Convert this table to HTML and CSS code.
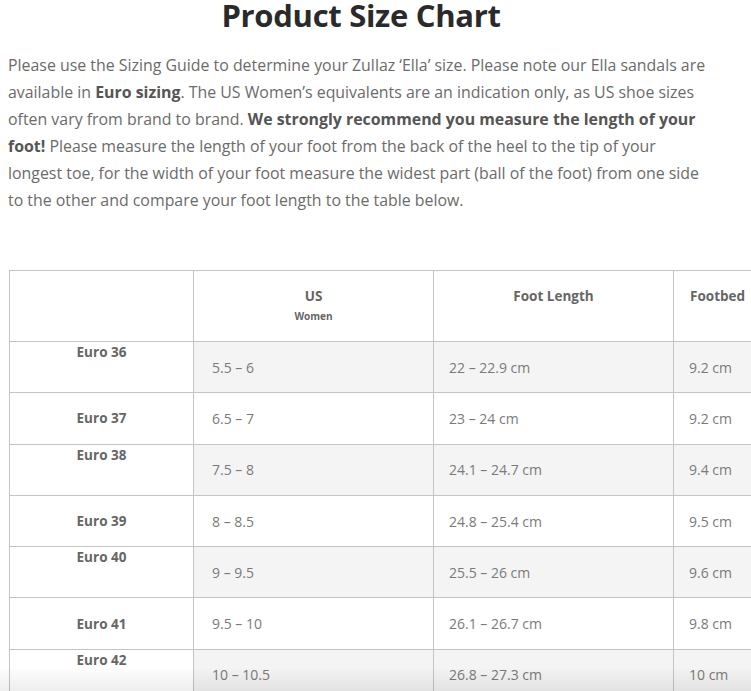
FILE: index.html
```html
<!DOCTYPE html>
<html>
<head>
<meta charset="utf-8">
<link rel="stylesheet" href="styles.css">
</head>
<body>
<div class="page">
  <div class="content">
    <h1 class="title">Product Size Chart</h1>
    <p class="intro">Please use the Sizing Guide to determine your Zullaz ‘Ella’ size. Please note our Ella sandals are<br>available in <strong>Euro sizing</strong>. The US Women’s equivalents are an indication only, as US shoe sizes<br>often vary from brand to brand. <strong>We strongly recommend you measure the length of your<br>foot!</strong> Please measure the length of your foot from the back of the heel to the tip of your<br>longest toe, for the width of your foot measure the widest part (ball of the foot) from one side<br>to the other and compare your foot length to the table below.</p>
  </div>
  <div class="table-wrap">
    <table class="chart">
      <colgroup><col class="c1"><col class="c2"><col class="c3"><col class="c4"></colgroup>
      <thead>
        <tr>
          <th></th>
          <th><span class="h-main">US</span><span class="h-sub">Women</span></th>
          <th><span class="h-main">Foot Length</span></th>
          <th class="left"><span class="h-main">Footbed</span></th>
        </tr>
      </thead>
      <tbody>
        <tr class="alt"><th class="top">Euro 36</th><td class="pl">5.5 – 6</td><td>22 – 22.9 cm</td><td>9.2 cm</td></tr>
        <tr><th>Euro 37</th><td class="pl">6.5 – 7</td><td>23 – 24 cm</td><td>9.2 cm</td></tr>
        <tr class="alt"><th class="top">Euro 38</th><td class="pl">7.5 – 8</td><td>24.1 – 24.7 cm</td><td>9.4 cm</td></tr>
        <tr><th>Euro 39</th><td class="pl">8 – 8.5</td><td>24.8 – 25.4 cm</td><td>9.5 cm</td></tr>
        <tr class="alt"><th class="top">Euro 40</th><td class="pl">9 – 9.5</td><td>25.5 – 26 cm</td><td>9.6 cm</td></tr>
        <tr><th>Euro 41</th><td class="pl">9.5 – 10</td><td>26.1 – 26.7 cm</td><td>9.8 cm</td></tr>
        <tr class="alt"><th class="top">Euro 42</th><td class="pl">10 – 10.5</td><td>26.8 – 27.3 cm</td><td>10 cm</td></tr>
      </tbody>
    </table>
  </div>
  <div class="fade"></div>
</div>
</body>
</html>
```
FILE: styles.css
```css
html, body {
  margin: 0;
  padding: 0;
  background: #fff;
  overflow: hidden;
}
body {
  font-family: "Open Sans", "Liberation Sans", sans-serif;
  color: #6a6a6a;
}
.page {
  width: 751px;
  height: 691px;
  overflow: hidden;
}
.content {
  width: 706px;
  padding-left: 8px;
}
.title {
  margin: -4px 0 0 0;
  text-align: center;
  font-size: 31px;
  line-height: 38px;
  font-weight: 700;
  color: #2a2a2a;
  letter-spacing: -0.3px;
}
.intro {
  margin: 18px 0 0 0;
  font-size: 15.9px;
  line-height: 27px;
  color: #6b6b6b;
  white-space: nowrap;
}
.intro strong {
  font-weight: 700;
  color: #555;
}
.table-wrap {
  margin-top: 56px;
  padding-left: 9px;
}
.chart {
  border-collapse: collapse;
  table-layout: fixed;
  width: 904px;
  font-size: 13px;
}
.c1 { width: 184px; }
.c2, .c3, .c4 { width: 240px; }
.chart th, .chart td {
  border: 1px solid #c4c4c4;
}
.chart thead th {
  height: 55px;
  vertical-align: top;
  padding: 15px 16px 0 16px;
  text-align: center;
  color: #666;
  font-weight: 700;
}
.chart thead th.left {
  text-align: left;
}
.h-main {
  display: block;
  font-size: 13.5px;
  line-height: 20px;
}
.h-sub {
  display: block;
  font-size: 10px;
  line-height: 20px;
}
.chart tbody tr {
  height: 51.3px;
}
.chart tbody th {
  text-align: center;
  vertical-align: middle;
  font-size: 13.5px;
  font-weight: 700;
  color: #666;
  background: #fff;
  padding: 0 10px;
}
.chart tbody th.top {
  vertical-align: top;
  padding-top: 0;
  line-height: 20px;
}
.chart tbody td {
  padding: 0 15px;
  vertical-align: middle;
  color: #7a7a7a;
  font-size: 14px;
}
.chart tbody td.pl {
  padding-left: 18px;
}
.chart tbody tr.alt td {
  background: #f4f4f4;
}
.fade {
  position: fixed;
  left: 0;
  right: 0;
  bottom: 0;
  height: 24px;
  background: linear-gradient(to bottom, rgba(255,255,255,0), rgba(0,0,0,0.07));
  pointer-events: none;
}
```
